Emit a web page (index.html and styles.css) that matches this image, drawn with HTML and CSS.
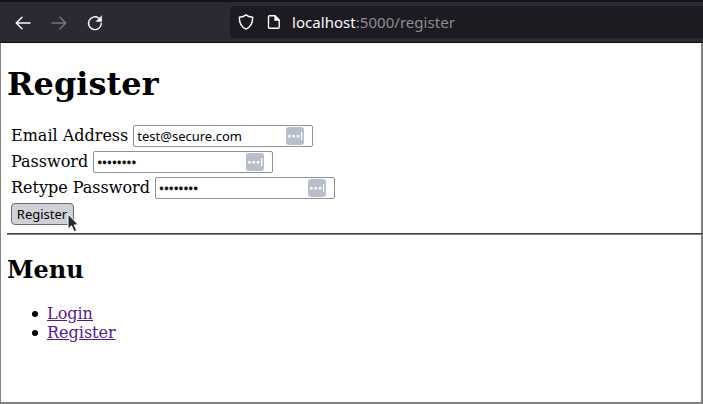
FILE: index.html
```html
<!DOCTYPE html>
<html lang="en">
<head>
<meta charset="utf-8">
<title>Register</title>
<link rel="stylesheet" href="styles.css">
</head>
<body>
<div class="window">
  <header class="toolbar">
    <nav class="nav">
      <svg class="icon" viewBox="0 0 16 16"><path d="M15 8H1.5M7 2.2L1.2 8L7 13.8"/></svg>
      <svg class="icon dim" viewBox="0 0 16 16"><path d="M1 8h13.5M9 2.2L14.8 8L9 13.8"/></svg>
      <svg class="icon" viewBox="0 0 16 16"><path d="M14.3 8.2A6.4 6.4 0 1 1 11.6 3"/><path class="solid" d="M14.6 1v5.4H9.2z"/></svg>
    </nav>
    <div class="url-bar">
      <svg class="icon" viewBox="0 0 16 16"><path d="M8 .9C6.3 2.3 4 3 1.3 3.3C1.3 9 3.2 13.1 8 15.2C12.8 13.1 14.7 9 14.7 3.3C12 3 9.7 2.3 8 .9z"/></svg>
      <svg class="icon page-icon" viewBox="0 0 16 16"><path d="M3.5 1.7H9L13.2 6V13.3Q13.2 14.3 12.2 14.3H3.5Q2.5 14.3 2.5 13.3V2.7Q2.5 1.7 3.5 1.7z"/><path class="solid" d="M8.6 1.6V6.5H13.4z"/></svg>
      <span class="url"><span class="host">localhost</span><span class="path">:5000/register</span></span>
    </div>
  </header>
  <main class="page">
    <h1>Register</h1>
    <form class="form">
      <div class="row"><label>Email Address</label><div class="field"><span class="email">test@secure.com</span>
        <svg class="key" viewBox="0 0 18 18"><rect width="18" height="18" rx="3"/><path d="M2.2 8h2.4v2.4H2.2zM6.5 8h2.4v2.4H6.5zM10.8 8h2.4v2.4h-2.4zM15 5h1.2v8H15z"/></svg></div></div>
      <div class="row"><label>Password</label><div class="field"><span class="dots">••••••••</span>
        <svg class="key" viewBox="0 0 18 18"><rect width="18" height="18" rx="3"/><path d="M2.2 8h2.4v2.4H2.2zM6.5 8h2.4v2.4H6.5zM10.8 8h2.4v2.4h-2.4zM15 5h1.2v8H15z"/></svg></div></div>
      <div class="row"><label>Retype Password</label><div class="field"><span class="dots">••••••••</span>
        <svg class="key" viewBox="0 0 18 18"><rect width="18" height="18" rx="3"/><path d="M2.2 8h2.4v2.4H2.2zM6.5 8h2.4v2.4H6.5zM10.8 8h2.4v2.4h-2.4zM15 5h1.2v8H15z"/></svg></div></div>
      <div class="row"><button class="submit" type="button">Register</button></div>
      <svg class="cursor" viewBox="0 0 12 20"><path d="M1 1V16L4.5 12.8L7 18.6L9.7 17.4L7.2 11.9H11.4z"/></svg>
    </form>
    <hr>
    <h2>Menu</h2>
    <ul>
      <li><a href="#">Login</a></li>
      <li><a href="#">Register</a></li>
    </ul>
  </main>
</div>
</body>
</html>
```
FILE: styles.css
```css
* { box-sizing: border-box; }
body {
  margin: 0;
  background: #fff;
  color: #000;
  font: 16px/19px "DejaVu Serif", serif;
}
.window {
  width: 703px;
  height: 404px;
  border: solid #808080;
  border-width: 0 2px 2px 1px;
}
.toolbar {
  display: flex;
  height: 43px;
  margin: 0 -2px 0 -1px;
  padding-top: 4px;
  background: #2b2a33;
  border-top: 2px solid #131219;
  border-bottom: 1px solid #08080c;
}
.nav {
  display: flex;
  gap: 20px;
  width: 230px;
  padding: 9px 0 0 15px;
}
.icon {
  width: 16px;
  height: 16px;
  flex: none;
  fill: none;
  stroke: #fbfbfe;
  stroke-width: 1.4;
  stroke-linecap: round;
  stroke-linejoin: round;
}
.icon .solid { fill: #fbfbfe; stroke-width: .5; }
.icon.dim { stroke: #77767d; }
.url-bar {
  display: flex;
  align-items: center;
  flex: 1;
  height: 32px;
  padding-left: 8px;
  background: #1c1b22;
  border-radius: 4px 0 0 4px;
}
.page-icon { margin-left: 12px; }
.url {
  margin-left: 10px;
  font: 15px/20px "Noto Sans", sans-serif;
  letter-spacing: .04px;
  color: #8d8d92;
  white-space: nowrap;
}
.host { color: #fbfbfe; }
.page { padding-left: 6px; }
h1 { margin: 22px 0 21px; font-size: 32px; line-height: 38px; }
.form { position: relative; padding: 1px 0 0 4px; }
.row {
  display: flex;
  align-items: flex-start;
  gap: 5px;
  height: 26px;
}
label { line-height: 21px; }
.field {
  display: flex;
  align-items: center;
  justify-content: space-between;
  width: 180px;
  height: 22px;
  padding: 0 8px 0 3px;
  border: 1px solid #8f8f9d;
  border-radius: 2px;
  font: 13px/18px "Noto Sans", sans-serif;
}
.key { width: 18px; height: 18px; fill: #fff; }
.key rect { fill: #b8bfca; }
.dots { -webkit-text-stroke: .5px #000; }
.submit {
  width: 63px;
  height: 22px;
  padding: 0 1px 0 0;
  border: 1px solid #6b6a76;
  border-radius: 4px;
  background: #d0d0d7;
  color: #000;
  font: 13px/18px "Noto Sans", sans-serif;
}
.cursor {
  position: absolute;
  left: 60px;
  top: 89px;
  width: 12px;
  height: 20px;
  fill: #2b2b2b;
  stroke: #fff;
  stroke-width: 1;
}
hr {
  height: 2px;
  margin: 4px -2px 0 0;
  border: 0;
  border-top: 1px solid #444;
  background: #808080;
}
h2 { margin: 21px 0 20px; font-size: 24px; line-height: 28px; }
ul { margin: 0; padding: 0; list-style: none; }
li { display: flex; padding-left: 25px; }
li::before {
  content: "";
  width: 6px;
  height: 6px;
  margin: 7px 9px 0 0;
  border-radius: 50%;
  background: #000;
}
a { color: #551a8b; }
```
